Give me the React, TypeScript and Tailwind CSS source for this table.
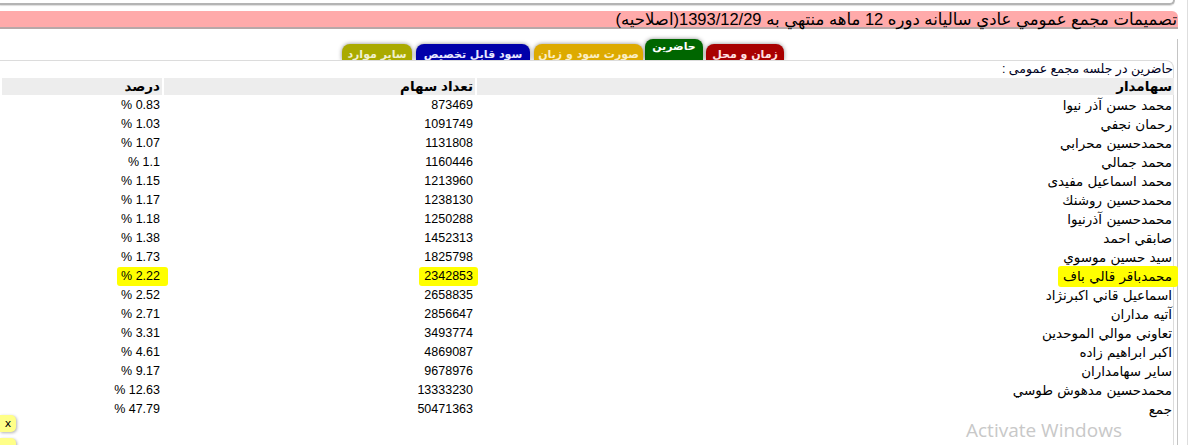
import React from "react";

const rows: [string, string, string, boolean?][] = [
  ["محمد حسن آذر نيوا", "873469", "0.83"],
  ["رحمان نجفي", "1091749", "1.03"],
  ["محمدحسين محرابي", "1131808", "1.07"],
  ["محمد جمالي", "1160446", "1.1"],
  ["محمد اسماعيل مفيدی", "1213960", "1.15"],
  ["محمدحسين روشنك", "1238130", "1.17"],
  ["محمدحسين آذرنيوا", "1250288", "1.18"],
  ["صابقي احمد", "1452313", "1.38"],
  ["سيد حسين موسوي", "1825798", "1.73"],
  ["محمدباقر قالي باف", "2342853", "2.22", true],
  ["اسماعيل قاني اكبرنژاد", "2658835", "2.52"],
  ["آتيه مداران", "2856647", "2.71"],
  ["تعاوني موالي الموحدين", "3493774", "3.31"],
  ["اكبر ابراهيم زاده", "4869087", "4.61"],
  ["ساير سهامداران", "9678976", "9.17"],
  ["محمدحسين مدهوش طوسي", "13333230", "12.63"],
  ["جمع", "50471363", "47.79"],
];

const font = "font-['Liberation_Sans','DejaVu_Sans',sans-serif]";
const tab = "overflow-hidden rounded-t-[8px] text-center shadow-[0_0_4px_rgba(0,0,0,0.45)]";

export default function App() {
  return (
    <div className={`relative w-[1194px] h-[445px] overflow-hidden bg-white ${font} text-black`}>
      <div className="flex">
        <div className="w-[1178px] shrink-0">
          {/* top box bottom */}
          <div className="h-[5px] w-[1175px] border-b-2 border-r-2 border-[#b4b4b4] rounded-br-[6px] shadow-[0_1px_1px_#ddd]"></div>
          {/* title */}
          <div
            dir="rtl"
            className="mt-[6px] h-[18px] w-[1178px] bg-[#ffaaaa] rounded-tr-[6px] border-b-2 border-[#b8a8a8] pr-[1px] text-[16.5px] leading-[16px] whitespace-nowrap"
          >
            تصميمات مجمع عمومي عادي ساليانه دوره 12 ماهه منتهي به 1393/12/29(اصلاحيه)
          </div>
          <div className="border-r border-[#c4c4c4]">
            {/* tabs */}
            <div dir="rtl" className="mt-[10px] flex items-end h-[21px] pr-[393px] text-[11px] font-bold leading-[14px] whitespace-nowrap font-['DejaVu_Sans',sans-serif]">
              <div className={`w-[78px] h-[16px] bg-[#a80000] text-[#ffe0e0] pt-[4px] ${tab}`}>
                زمان و محل
              </div>
              <div className={`mr-[3px] w-[58px] h-[21px] bg-[#006600] text-white pt-[1px] ${tab}`}>
                حاضرين
              </div>
              <div className={`mr-[2px] w-[109px] h-[16px] bg-[#ddaa00] text-[#fbeec4] pt-[4px] ${tab}`}>
                صورت سود و زيان
              </div>
              <div className={`mr-[4px] w-[114px] h-[16px] bg-[#0000aa] text-[#e8e8ff] pt-[4px] ${tab}`}>
                سود قابل تخصيص
              </div>
              <div className={`mr-[4px] w-[70px] h-[16px] bg-[#aaaa00] text-[#f0f0d0] pt-[4px] ${tab}`}>
                ساير موارد
              </div>
            </div>
            {/* content */}
            <div className="relative z-10 w-[1174px] bg-white border-t border-r border-[#dcdcdc] rounded-tr-[8px] h-[385px]">
              <div dir="rtl" className="text-[12.5px] leading-[15px] pt-[1px] text-[#000022]">
                حاضرين در جلسه مجمع عمومی :
              </div>
              <table dir="rtl" className="border-separate border-spacing-x-[2px] border-spacing-y-[2px] -mt-[1px] -mr-[2px] w-[1176px] text-[12.5px] leading-[17px]">
                <colgroup>
                  <col className="w-[697px]" />
                  <col className="w-[311px]" />
                  <col />
                </colgroup>
                <thead>
                  <tr className="bg-[#ededed] font-bold text-[13.5px]">
                    <td className="h-[17px] p-0 pr-[2px] text-right">سهامدار</td>
                    <td className="h-[17px] p-0 pr-[2px] text-right">تعداد سهام</td>
                    <td className="h-[17px] p-0 pr-[2px] text-right">درصد</td>
                  </tr>
                </thead>
                <tbody>
                  {rows.map(([name, shares, pct, hl]) => (
                    <tr key={name}>
                      <td className="h-[17px] p-0 pr-[2px] text-right whitespace-nowrap text-[13.5px] font-['DejaVu_Sans',sans-serif]">
                        {hl ? (
                          <span className="inline-block -mr-[6px] pr-[6px] pl-[5px] bg-[#ffff00] rounded-[3px] leading-[21px] -my-[2px]">{name}</span>
                        ) : (
                          name
                        )}
                      </td>
                      <td className="h-[17px] p-0 pr-[2px] text-right">
                        {hl ? (
                          <span className="inline-block -mr-[5px] pr-[5px] pl-[5px] bg-[#ffff00] rounded-[3px] leading-[19px] -my-[1px]">{shares}</span>
                        ) : (
                          shares
                        )}
                      </td>
                      <td className="h-[17px] p-0 pr-[2px] text-right">
                        {hl ? (
                          <span dir="ltr" className="inline-block -mr-[8px] pr-[8px] pl-[4px] bg-[#ffff00] rounded-[3px] leading-[19px] -my-[1px]">% {pct}</span>
                        ) : (
                          <span dir="ltr">% {pct}</span>
                        )}
                      </td>
                    </tr>
                  ))}
                </tbody>
              </table>
            </div>
          </div>
        </div>
        <div className="ml-[9px] w-[7px] border-l border-[#dedede] h-[445px]"></div>
      </div>

      {/* floating yellow x boxes */}
      <div className="absolute z-20 left-0 top-[415px] w-[16px] h-[17px] bg-[#ffff88] rounded-r-[5px] shadow-[1px_1px_3px_rgba(0,0,0,0.3)] text-[11px] leading-[17px] text-center font-['DejaVu_Sans',sans-serif]">
        x
      </div>
      <div className="absolute z-20 left-0 top-[438px] w-[16px] h-[17px] bg-[#ffff88] rounded-r-[5px] shadow-[1px_1px_3px_rgba(0,0,0,0.3)]"></div>

      {/* windows watermark */}
      <div className="absolute z-20 left-[966px] top-[417px] text-[19px] leading-[26px] text-[#c8c8c8] font-['Open_Sans',sans-serif] whitespace-nowrap">
        Activate Windows
      </div>
    </div>
  );
}
